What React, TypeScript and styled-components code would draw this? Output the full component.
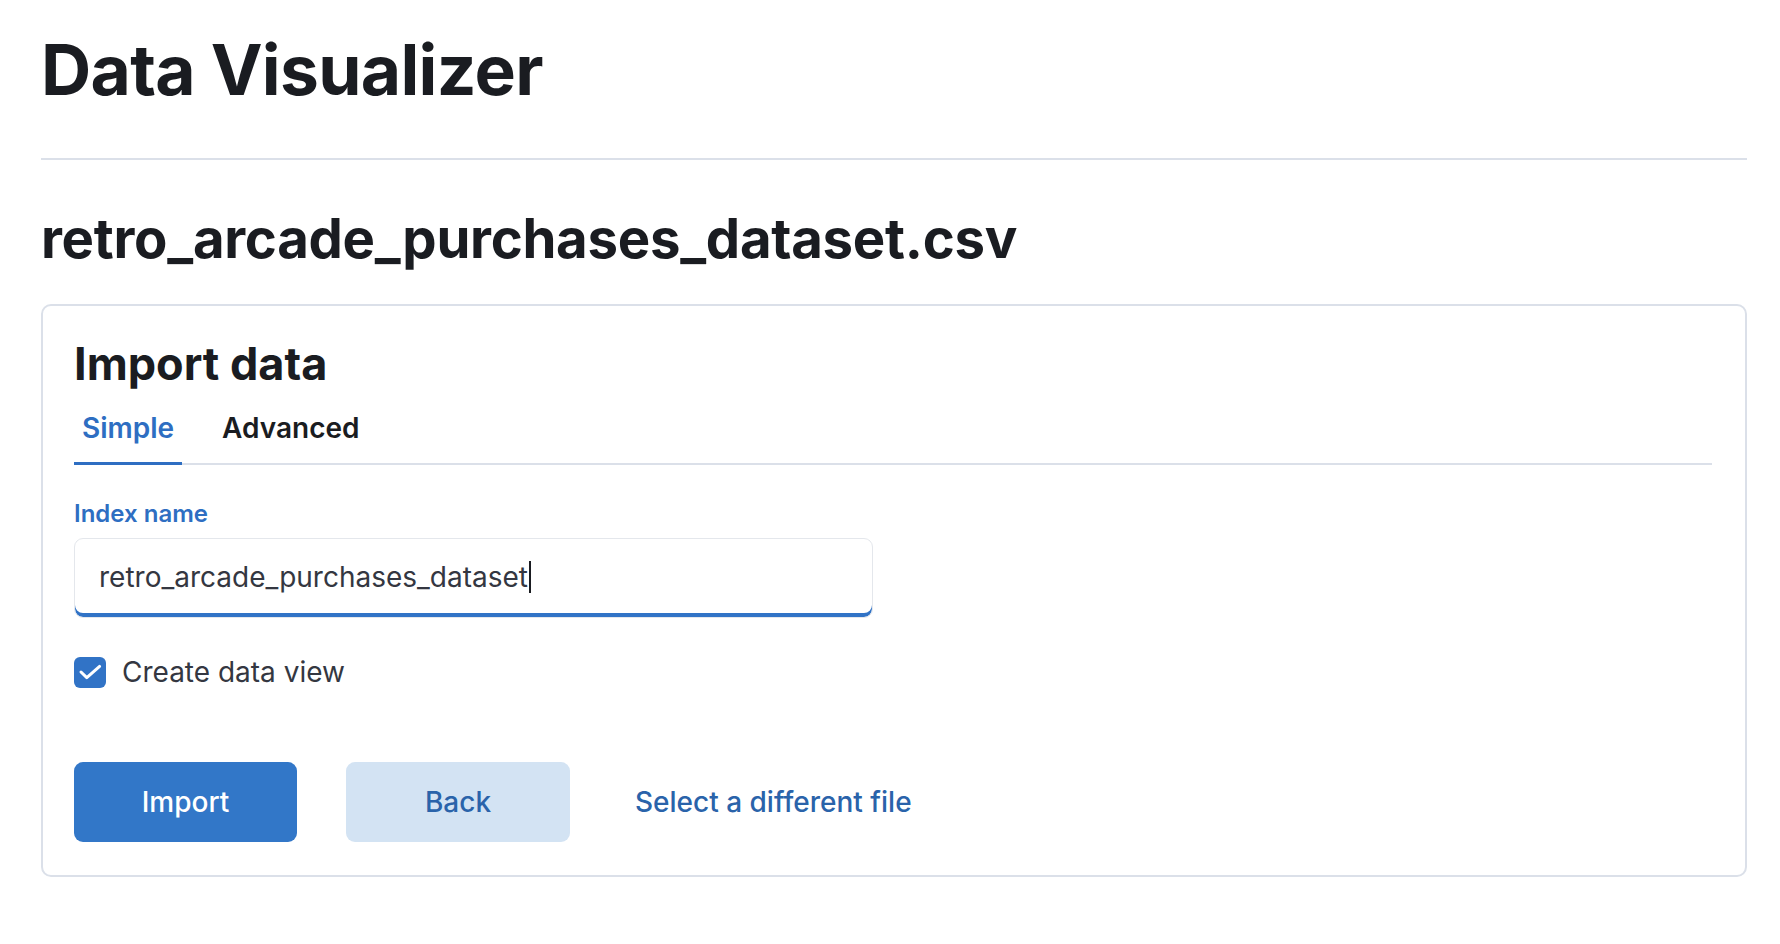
import React, { useState } from "react";
import styled, { createGlobalStyle } from "styled-components";

const GlobalStyle = createGlobalStyle`
  html, body {
    margin: 0;
    padding: 0;
    background: #ffffff;
  }
  body {
    font-family: Inter, "Noto Sans", "Liberation Sans", sans-serif;
    color: #1a1c21;
    -webkit-font-smoothing: antialiased;
  }
  * {
    box-sizing: border-box;
  }
`;

type TabProps = {
  $selected?: boolean;
};

const App: React.FC = () => {
  const [tab, setTab] = useState<string>("simple");
  const [createView, setCreateView] = useState<boolean>(true);
  const indexName = "retro_arcade_purchases_dataset";

  return (
    <Page>
      <GlobalStyle />
      <PageTitle>Data Visualizer</PageTitle>
      <Rule />
      <FileTitle>retro_arcade_purchases_dataset.csv</FileTitle>
      <Panel>
        <PanelTitle>Import data</PanelTitle>
        <TabList>
          <Tab $selected={tab === "simple"} onClick={() => setTab("simple")}>
            Simple
          </Tab>
          <Tab
            $selected={tab === "advanced"}
            onClick={() => setTab("advanced")}
          >
            Advanced
          </Tab>
        </TabList>
        <FieldLabel>Index name</FieldLabel>
        <Field>
          <span>{indexName}</span>
          <Caret />
        </Field>
        <CheckRow onClick={() => setCreateView((v) => !v)}>
          <CheckBox $checked={createView}>
            {createView && (
              <svg width="32" height="31" viewBox="0 0 32 31" fill="none">
                <path
                  d="M7 15 L12.8 20.6 L25.6 9.4"
                  stroke="#ffffff"
                  strokeWidth="3"
                  strokeLinecap="round"
                  strokeLinejoin="round"
                />
              </svg>
            )}
          </CheckBox>
          <CheckText>Create data view</CheckText>
        </CheckRow>
        <Actions>
          <FillButton>Import</FillButton>
          <SoftButton>Back</SoftButton>
          <LinkButton>Select a different file</LinkButton>
        </Actions>
      </Panel>
    </Page>
  );
};

const Page = styled.div`
  display: flex;
  flex-direction: column;
  padding: 28px 33px 60px 41px;
`;

const PageTitle = styled.h1`
  margin: 0;
  font-size: 69.5px;
  line-height: 84px;
  font-weight: 700;
  letter-spacing: -0.01em;
  color: #1a1c21;
`;

const Rule = styled.hr`
  margin: 46px 0 0;
  border: none;
  height: 2px;
  background: #dbe0e9;
`;

const FileTitle = styled.h2`
  margin: 46px 0 0;
  font-size: 54.5px;
  line-height: 64px;
  font-weight: 700;
  letter-spacing: -0.005em;
  color: #1a1c21;
`;

const Panel = styled.section`
  margin-top: 34px;
  border: 2px solid #dbe0e9;
  border-radius: 10px;
  padding: 31px 31px 33px 31px;
  display: flex;
  flex-direction: column;
  align-items: flex-start;
`;

const PanelTitle = styled.h3`
  margin: 0;
  font-size: 45px;
  line-height: 54px;
  font-weight: 700;
  color: #1a1c21;
`;

const TabList = styled.div`
  display: flex;
  gap: 32px;
  align-self: stretch;
  margin-right: 2px;
  box-shadow: inset 0 -2px 0 #dbe0e9;
`;

const Tab = styled.button<TabProps>`
  border: none;
  background: none;
  font-family: inherit;
  padding: 20px 8px 17px;
  font-size: 28px;
  line-height: 34px;
  font-weight: 600;
  color: ${(p) => (p.$selected ? "#2e6ec2" : "#1a1c21")};
  border-bottom: 3px solid ${(p) => (p.$selected ? "#2e6ec2" : "transparent")};
  cursor: pointer;
`;

const FieldLabel = styled.label`
  margin-top: 34px;
  font-size: 24px;
  line-height: 30px;
  font-weight: 600;
  color: #2e6ec2;
`;

const Field = styled.div`
  margin-top: 9px;
  width: 799px;
  height: 80px;
  display: flex;
  align-items: center;
  padding: 0 24px 3px;
  border: 1px solid #e4e7ec;
  border-radius: 9px;
  box-shadow: inset 0 -4px 0 #3173c6;
  font-size: 28px;
  color: #343741;
`;

const Caret = styled.span`
  display: inline-block;
  width: 2px;
  height: 32px;
  margin-left: 1px;
  background: #1a1c21;
`;

const CheckRow = styled.div`
  margin-top: 37px;
  display: flex;
  align-items: center;
  gap: 16px;
  cursor: pointer;
`;

const CheckBox = styled.span<{ $checked?: boolean }>`
  width: 32px;
  height: 31px;
  border-radius: 6px;
  display: flex;
  align-items: center;
  justify-content: center;
  background: ${(p) => (p.$checked ? "#3173c6" : "#ffffff")};
  border: ${(p) => (p.$checked ? "none" : "1px solid #c5ccd8")};
`;

const CheckText = styled.span`
  font-size: 28px;
  color: #343741;
`;

const Actions = styled.div`
  margin-top: 73px;
  display: flex;
  align-items: center;
  gap: 49px;
`;

const BaseButton = styled.button`
  height: 80px;
  border: none;
  border-radius: 9px;
  font-family: inherit;
  font-size: 28px;
  font-weight: 500;
  cursor: pointer;
`;

const FillButton = styled(BaseButton)`
  width: 223px;
  background: #3277c8;
  color: #ffffff;
`;

const SoftButton = styled(BaseButton)`
  width: 224px;
  background: #d3e3f3;
  color: #2a63aa;
`;

const LinkButton = styled(BaseButton)`
  background: none;
  padding: 0 16px;
  color: #2a63aa;
`;

export default App;
